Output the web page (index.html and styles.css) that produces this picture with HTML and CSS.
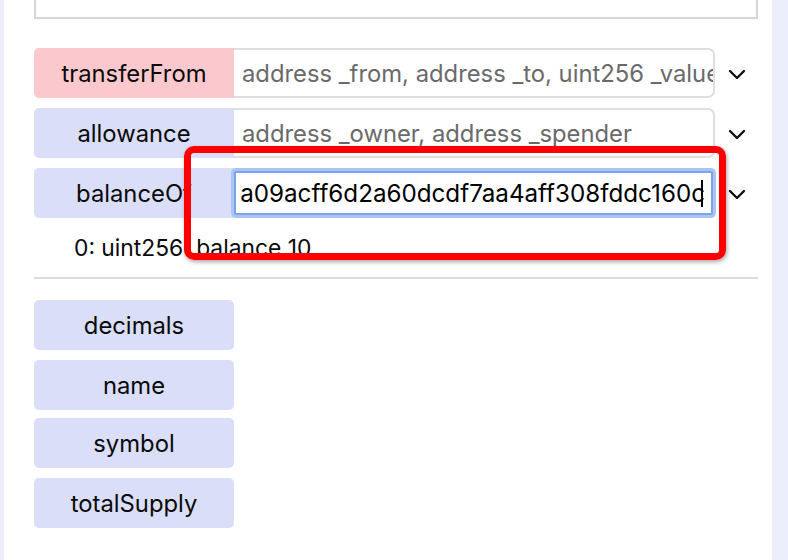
FILE: index.html
```html
<!DOCTYPE html>
<html>
<head>
<meta charset="utf-8">
<link rel="stylesheet" href="styles.css">
</head>
<body>
<div class="page">
  <div class="strip-left"></div>
  <main class="content">
    <div class="top-box"></div>

    <div class="functions">
      <div class="row">
        <button class="fn fn-pay">transferFrom</button>
        <div class="args"><span class="placeholder">address _from, address _to, uint256 _value</span></div>
        <div class="toggle"><svg width="18" height="11" viewBox="0 0 18 11"><polyline points="2,2 9,9 16,2" fill="none" stroke="#111" stroke-width="2.4" stroke-linecap="round" stroke-linejoin="round"/></svg></div>
      </div>
      <div class="row">
        <button class="fn">allowance</button>
        <div class="args"><span class="placeholder">address _owner, address _spender</span></div>
        <div class="toggle"><svg width="18" height="11" viewBox="0 0 18 11"><polyline points="2,2 9,9 16,2" fill="none" stroke="#111" stroke-width="2.4" stroke-linecap="round" stroke-linejoin="round"/></svg></div>
      </div>
      <div class="row">
        <button class="fn">balanceOf</button>
        <div class="args-focus"><span class="value">a09acff6d2a60dcdf7aa4aff308fddc160c</span><span class="caret"></span></div>
        <div class="toggle"><svg width="18" height="11" viewBox="0 0 18 11"><polyline points="2,2 9,9 16,2" fill="none" stroke="#111" stroke-width="2.4" stroke-linecap="round" stroke-linejoin="round"/></svg></div>
      </div>
      <div class="result">0: uint256: balance 10</div>
    </div>

    <div class="separator"></div>

    <div class="constants">
      <button class="fn">decimals</button>
      <button class="fn">name</button>
      <button class="fn fn-tight">symbol</button>
      <button class="fn">totalSupply</button>
    </div>
  </main>
  <div class="strip-right"></div>
  <div class="highlight"></div>
</div>
</body>
</html>
```

FILE: styles.css
```css
* { box-sizing: border-box; }

html, body {
  margin: 0;
  padding: 0;
  background: #ffffff;
}

body {
  font-family: Inter, "Liberation Sans", Arial, sans-serif;
  color: #111;
}

.page {
  position: relative;
  display: flex;
  width: 788px;
  height: 560px;
  overflow: hidden;
}

.strip-left {
  width: 4px;
  background: #eceefc;
  flex: none;
}

.strip-right {
  width: 16px;
  margin-left: auto;
  background: #eceefc;
  flex: none;
}

.content {
  width: 724px;
  margin-left: 30px;
  display: flex;
  flex-direction: column;
}

.top-box {
  height: 19px;
  border: 2px solid #d6d6d6;
  border-top: none;
}

.functions {
  margin-top: 29px;
  display: flex;
  flex-direction: column;
  gap: 10px;
}

.row {
  display: flex;
  height: 50px;
  align-items: stretch;
}

.fn {
  width: 200px;
  height: 50px;
  flex: none;
  border: none;
  border-radius: 5px;
  background: #dbdef8;
  font-family: inherit;
  font-size: 23.8px;
  color: #0a0a0a;
  padding: 0;
  text-align: center;
  white-space: nowrap;
  overflow: hidden;
}

.row .fn {
  border-top-right-radius: 0;
  border-bottom-right-radius: 0;
}

.fn-pay {
  background: #fbc9cd;
}

.args {
  width: 481px;
  flex: none;
  border: 2px solid #dedede;
  border-left: none;
  border-radius: 0 7px 7px 0;
  display: flex;
  align-items: center;
  padding-left: 8px;
  overflow: hidden;
  white-space: nowrap;
}

.placeholder {
  font-size: 23.8px;
  color: #6a6a6a;
}

.args-focus {
  width: 479px;
  margin: 3px 2px 3px 0;
  flex: none;
  border: 2px solid #7aa5e9;
  border-radius: 2px;
  box-shadow: 0 0 0 3px #a9c6f3;
  display: flex;
  align-items: center;
  justify-content: flex-end;
  padding-right: 8px;
  overflow: hidden;
  white-space: nowrap;
  background: #fff;
}

.value {
  font-size: 24.2px;
  color: #000;
  flex: none;
}

.caret {
  width: 2px;
  height: 27px;
  background: #000;
  margin-left: -4px;
  flex: none;
}

.toggle {
  flex: 1;
  display: flex;
  align-items: center;
  justify-content: center;
  padding-top: 2px;
}

.result {
  padding-left: 40px;
  font-size: 22.8px;
  line-height: 40px;
  color: #0a0a0a;
}

.separator {
  margin-top: 9px;
  height: 2px;
  background: #dddddd;
}

.constants {
  margin-top: 21px;
  display: flex;
  flex-direction: column;
  gap: 10px;
}

.fn-tight {
  margin-top: -2px;
}

.highlight {
  position: absolute;
  left: 184px;
  top: 146px;
  width: 542px;
  height: 114px;
  border: 7px solid #fe0000;
  border-radius: 10px;
  box-shadow: 1px 2px 4px rgba(0, 0, 0, 0.35);
}
```
